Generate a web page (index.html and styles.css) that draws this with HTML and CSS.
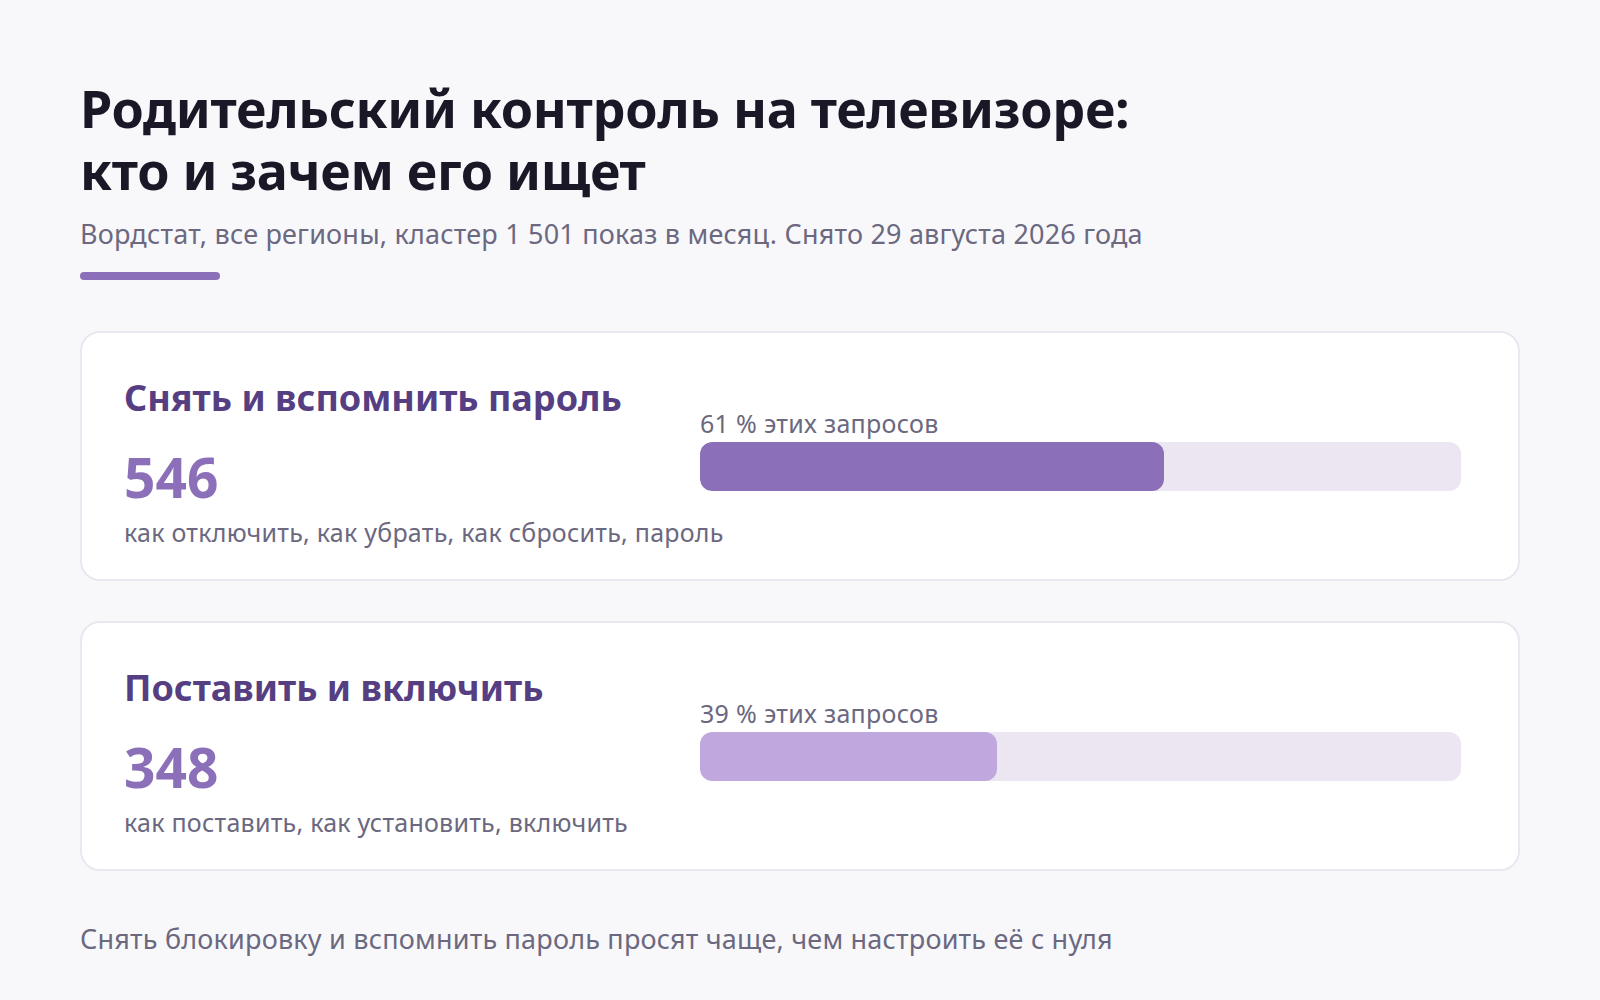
FILE: index.html
```html
<!DOCTYPE html>
<html lang="ru">
<head>
<meta charset="utf-8">
<title>Родительский контроль на телевизоре</title>
<link rel="stylesheet" href="styles.css">
</head>
<body>
<main class="page">
  <header class="head">
    <h1 class="title">Родительский контроль на телевизоре:<br>кто и зачем его ищет</h1>
    <p class="subtitle">Вордстат, все регионы, кластер 1 501 показ в месяц. Снято 29 августа 2026 года</p>
    <div class="accent"></div>
  </header>

  <section class="cards">
    <article class="card">
      <div class="card-left">
        <h2 class="card-title">Снять и вспомнить пароль</h2>
        <div class="card-num">546</div>
        <p class="card-desc">как отключить, как убрать, как сбросить, пароль</p>
      </div>
      <div class="card-right">
        <div class="bar-label">61 % этих запросов</div>
        <div class="bar-track"><div class="bar-fill bar-fill--dark" style="width:61%"></div></div>
      </div>
    </article>

    <article class="card">
      <div class="card-left">
        <h2 class="card-title">Поставить и включить</h2>
        <div class="card-num">348</div>
        <p class="card-desc">как поставить, как установить, включить</p>
      </div>
      <div class="card-right">
        <div class="bar-label">39 % этих запросов</div>
        <div class="bar-track"><div class="bar-fill bar-fill--light" style="width:39%"></div></div>
      </div>
    </article>
  </section>

  <p class="footnote">Снять блокировку и вспомнить пароль просят чаще, чем настроить её с нуля</p>
</main>
</body>
</html>
```

FILE: styles.css
```css
* { box-sizing: border-box; }

html, body {
  margin: 0;
  padding: 0;
  background: #f8f8fb;
}

body {
  font-family: "Noto Sans", "Open Sans", "DejaVu Sans", sans-serif;
  color: #1a1726;
}

.page {
  padding: 77px 80px 40px 80px;
}

.title {
  margin: 0;
  font-size: 52px;
  line-height: 62px;
  font-weight: 700;
  color: #1a1726;
  letter-spacing: -0.3px;
}

.subtitle {
  margin: 15px 0 0 0;
  font-size: 27px;
  line-height: 36px;
  color: #6b6880;
  letter-spacing: 0.2px;
}

.accent {
  margin-top: 20px;
  width: 140px;
  height: 8px;
  border-radius: 4px;
  background: #8b6fb8;
}

.cards {
  margin-top: 51px;
  display: flex;
  flex-direction: column;
  gap: 40px;
}

.card {
  background: #ffffff;
  border: 2px solid #e9e7f0;
  border-radius: 20px;
  padding: 43px 57px 30px 42px;
  display: grid;
  grid-template-columns: 536px 1fr;
  column-gap: 40px;
  align-items: start;
}

.card-title {
  margin: 0;
  font-size: 36px;
  line-height: 43px;
  font-weight: 700;
  color: #553f82;
}

.card-num {
  margin-top: 27px;
  font-size: 55px;
  line-height: 61px;
  font-weight: 700;
  color: #8b6fb8;
}

.card-desc {
  margin: 8px 0 0 0;
  font-size: 25px;
  line-height: 34px;
  color: #6b6880;
  letter-spacing: 0.25px;
  white-space: nowrap;
}

.card-right {
  margin-top: 32px;
}

.bar-label {
  font-size: 25px;
  line-height: 31px;
  color: #6b6880;
  letter-spacing: 0.3px;
  margin-bottom: 3px;
}

.bar-track {
  height: 49px;
  border-radius: 12px;
  background: #ece6f3;
  overflow: hidden;
}

.bar-fill {
  height: 100%;
  border-radius: 12px;
}

.bar-fill--dark { background: #8b6fb8; }
.bar-fill--light { background: #c0a8de; }

.footnote {
  margin: 50px 0 0 0;
  font-size: 27px;
  line-height: 36px;
  color: #6b6880;
  letter-spacing: 0.2px;
}
```
